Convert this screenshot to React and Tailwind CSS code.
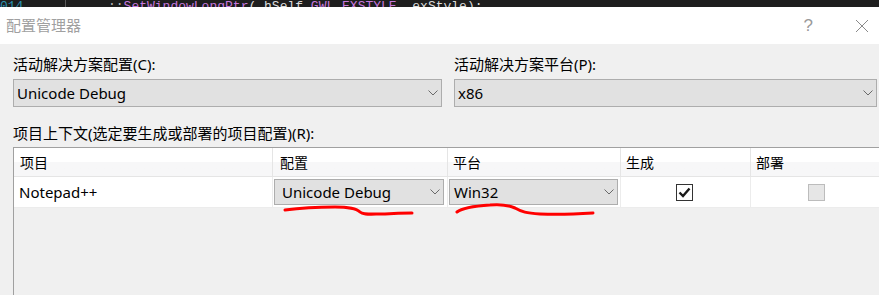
import React from "react";

const F = { fontFamily: '"Noto Sans", "Noto Sans CJK SC", sans-serif' };

function Chevron({ className = "" }) {
  return (
    <svg width="10" height="6" viewBox="0 0 10 6" className={className}>
      <path d="M0.5 0.5 L5 5 L9.5 0.5" fill="none" stroke="#6a6a6a" strokeWidth="1" />
    </svg>
  );
}

function Combo({ text, className = "" }) {
  return (
    <div className={`flex items-center justify-between border border-[#adadad] bg-[#e1e1e1] ${className}`}>
      <span className="pl-[3px] text-[15px] leading-none text-black">{text}</span>
      <Chevron className="mr-[3px]" />
    </div>
  );
}

export default function App() {
  return (
    <div
      className="w-[879px] h-[295px] overflow-hidden flex flex-col bg-[#f0f0f0] text-black"
      style={F}
    >
      {/* code editor strip */}
      <div className="h-[7px] bg-[#1e1e1e] overflow-hidden flex items-end relative">
        <div
          className="flex items-end text-[13px] leading-none whitespace-nowrap -mb-[6px]"
          style={{ fontFamily: '"Liberation Mono", monospace' }}
        >
          <span className="w-[65px] text-[#2b91af]">014</span>
          <span className="w-[1px] h-[14px] bg-[#5a5a5a]"></span>
          <span className="pl-[42px] text-[#b4b4b4]">::</span>
          <span className="text-[#c678dd]">SetWindowLongPtr</span>
          <span className="text-[#dcdcdc]">(_hSelf, </span>
          <span className="text-[#c678dd]">GWL_EXSTYLE</span>
          <span className="text-[#dcdcdc]">, exStyle);</span>
        </div>
      </div>

      {/* title bar */}
      <div className="h-[37px] bg-white flex items-center justify-between">
        <span className="pl-[6px] text-[15px] text-[#a0a0a0]">配置管理器</span>
        <div className="flex items-center">
          <span className="text-[17px] text-[#9a9a9a] font-light" style={{ fontFamily: '"Liberation Sans", sans-serif' }}>?</span>
          <svg width="14" height="14" viewBox="0 0 14 14" className="ml-[42px] mr-[10px]">
            <path d="M1 1 L13 13 M13 1 L1 13" stroke="#8a8a8a" strokeWidth="1" />
          </svg>
        </div>
      </div>

      {/* body */}
      <div className="flex-1 relative pl-[13px] pt-[10px] flex flex-col">
        <div className="flex gap-[12px]">
          <div className="w-[429px] flex flex-col">
            <div className="h-[20px] flex items-center text-[15px]">活动解决方案配置(C):</div>
            <Combo text="Unicode Debug" className="mt-[5px] h-[28px] w-[429px]" />
          </div>
          <div className="w-[423px] flex flex-col shrink-0">
            <div className="h-[20px] flex items-center text-[15px]">活动解决方案平台(P):</div>
            <Combo text="x86" className="mt-[5px] h-[28px] w-[423px]" />
          </div>
        </div>

        <div className="mt-[16px] h-[20px] flex items-center text-[15px]">
          项目上下文(选定要生成或部署的项目配置)(R):
        </div>

        <div className="mt-[4px] flex-1 border-l border-t border-[#a0a0a0] flex flex-col w-[880px]">
          {/* header */}
          <div className="h-[29px] flex border-b border-[#e5e5e5] bg-gradient-to-b from-white from-50% to-[#f7f7f8] to-50% text-[14px]">
            <div className="w-[259px] pl-[6px] flex items-center border-r border-[#e5e5e5]">项目</div>
            <div className="w-[175px] pl-[7px] flex items-center border-r border-[#e5e5e5]">配置</div>
            <div className="w-[173px] pl-[5px] flex items-center border-r border-[#e5e5e5]">平台</div>
            <div className="w-[130px] pl-[5px] flex items-center border-r border-[#e5e5e5]">生成</div>
            <div className="w-[130px] pl-[5px] flex items-center">部署</div>
          </div>
          {/* row */}
          <div className="h-[31px] flex bg-white border-b border-[#ececec]">
            <div className="w-[259px] pl-[5px] flex items-center text-[15px] border-r border-[#ececec]">Notepad++</div>
            <div className="w-[175px] pl-[1px] flex items-center border-r border-[#ececec]">
              <Combo text="Unicode Debug" className="h-[26px] w-[170px] pl-[4px]" />
            </div>
            <div className="w-[173px] pl-[1px] flex items-center border-r border-[#ececec]">
              <Combo text="Win32" className="h-[26px] w-[169px] pl-[1px]" />
            </div>
            <div className="w-[130px] flex items-center justify-center border-r border-[#ececec]">
              <div className="w-[17px] h-[17px] border border-[#333] bg-white flex items-center justify-center mr-[2px]">
                <svg width="13" height="11" viewBox="0 0 13 11">
                  <path d="M1.5 5.5 L5 9 L11.5 1.5" fill="none" stroke="#1a1a1a" strokeWidth="2.4" />
                </svg>
              </div>
            </div>
            <div className="w-[130px] flex items-center justify-center">
              <div className="w-[17px] h-[17px] border border-[#bcbcbc] bg-[#e6e6e6] ml-[1px]"></div>
            </div>
          </div>
        </div>

        {/* red hand-drawn underlines (annotation overlay) */}
        <svg className="absolute left-0 top-0 pointer-events-none" width="879" height="251" viewBox="0 44 879 251">
          <path
            d="M285 210 C300 208 320 207 335 207 C348 207 356 208 360 212 C363 215 370 214 385 214 C398 213 406 213 412 213"
            fill="none" stroke="#ff0000" strokeWidth="3" strokeLinecap="round"
          />
          <path
            d="M457 212 C462 208 475 206 490 205 C500 204 508 205 515 208 C522 212 526 213 540 214 C560 215 578 214 593 213"
            fill="none" stroke="#ff0000" strokeWidth="3" strokeLinecap="round"
          />
        </svg>
      </div>
    </div>
  );
}
